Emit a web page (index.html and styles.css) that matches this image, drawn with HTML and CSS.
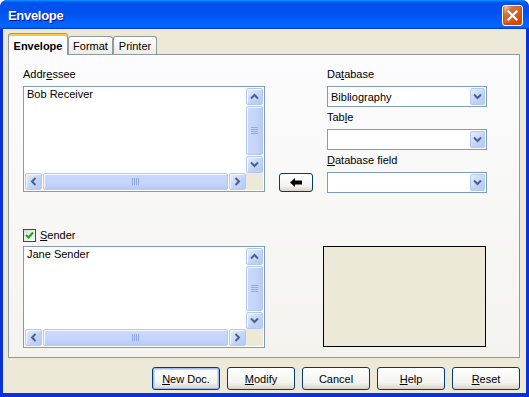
FILE: index.html
```html
<!DOCTYPE html>
<html lang="en">
<head>
    <meta charset="UTF-8">
    <meta name="viewport" content="width=device-width, initial-scale=1.0">
    <title>Envelope</title>
    <link rel="stylesheet" href="styles.css">
</head>
<body>
    <div class="window">
        <div class="titlebar">
            <span class="title">Envelope</span>
            <button class="close" aria-label="Close">
                <svg width="11" height="11" viewBox="0 0 11 11"><path d="M1.5 1.5 L9.5 9.5 M9.5 1.5 L1.5 9.5" stroke="#fff" stroke-width="2.2" stroke-linecap="square"/></svg>
            </button>
        </div>
        <div class="client">
            <div class="tabs">
                <div class="tab active">Envelope</div>
                <div class="tab format">Format</div>
                <div class="tab printer">Printer</div>
            </div>
            <div class="panel">
                <div class="top">
                    <div class="left-col">
                        <div class="label">Addr<u>e</u>ssee</div>
                        <div class="textbox addressee">
                            <div class="tb-text">Bob Receiver</div>
                            <div class="vscroll">
                                <span class="sb-btn"><svg width="9" height="7" viewBox="0 0 9 7"><path d="M1 5.5 L4.5 2 L8 5.5" fill="none" stroke="#4d6185" stroke-width="2"/></svg></span>
                                <span class="sb-thumb"><svg width="7" height="8" viewBox="0 0 7 8"><path d="M0 0.5 H7 M0 2.5 H7 M0 4.5 H7 M0 6.5 H7" stroke="#8eaae8" stroke-width="1"/></svg></span>
                                <span class="sb-btn"><svg width="9" height="7" viewBox="0 0 9 7"><path d="M1 1.5 L4.5 5 L8 1.5" fill="none" stroke="#4d6185" stroke-width="2"/></svg></span>
                            </div>
                            <div class="hscroll">
                                <span class="sb-btn"><svg width="7" height="9" viewBox="0 0 7 9"><path d="M5.5 1 L2 4.5 L5.5 8" fill="none" stroke="#4d6185" stroke-width="2"/></svg></span>
                                <span class="sb-thumb"><svg width="8" height="7" viewBox="0 0 8 7"><path d="M0.5 0 V7 M2.5 0 V7 M4.5 0 V7 M6.5 0 V7" stroke="#8eaae8" stroke-width="1"/></svg></span>
                                <span class="sb-btn"><svg width="7" height="9" viewBox="0 0 7 9"><path d="M1.5 1 L5 4.5 L1.5 8" fill="none" stroke="#4d6185" stroke-width="2"/></svg></span>
                            </div>
                            <div class="corner"></div>
                        </div>
                    </div>
                    <button class="arrow-btn" aria-label="Insert">
                        <svg width="12" height="9" viewBox="0 0 12 9"><path d="M0 4.5 L5 0 V2.5 H12 V6.5 H5 V9 Z" fill="#000"/></svg>
                    </button>
                    <div class="right-col">
                        <div class="label">Da<u>t</u>abase</div>
                        <div class="combo">
                            <span class="combo-text">Bibliography</span>
                            <span class="combo-btn"><svg width="9" height="7" viewBox="0 0 9 7"><path d="M1 1.5 L4.5 5 L8 1.5" fill="none" stroke="#4d6185" stroke-width="2"/></svg></span>
                        </div>
                        <div class="label">Tab<u>l</u>e</div>
                        <div class="combo">
                            <span class="combo-text"></span>
                            <span class="combo-btn"><svg width="9" height="7" viewBox="0 0 9 7"><path d="M1 1.5 L4.5 5 L8 1.5" fill="none" stroke="#4d6185" stroke-width="2"/></svg></span>
                        </div>
                        <div class="label"><u>D</u>atabase field</div>
                        <div class="combo">
                            <span class="combo-text"></span>
                            <span class="combo-btn"><svg width="9" height="7" viewBox="0 0 9 7"><path d="M1 1.5 L4.5 5 L8 1.5" fill="none" stroke="#4d6185" stroke-width="2"/></svg></span>
                        </div>
                    </div>
                </div>
                <div class="bottom">
                    <div class="left-col">
                        <div class="check">
                            <span class="check-box"><svg width="9" height="9" viewBox="0 0 9 9"><path d="M1 4 L3.5 6.5 L8 1.5" fill="none" stroke="#21a121" stroke-width="2"/></svg></span>
                            <span><u>S</u>ender</span>
                        </div>
                        <div class="textbox sender">
                            <div class="tb-text">Jane Sender</div>
                            <div class="vscroll">
                                <span class="sb-btn"><svg width="9" height="7" viewBox="0 0 9 7"><path d="M1 5.5 L4.5 2 L8 5.5" fill="none" stroke="#4d6185" stroke-width="2"/></svg></span>
                                <span class="sb-thumb"><svg width="7" height="8" viewBox="0 0 7 8"><path d="M0 0.5 H7 M0 2.5 H7 M0 4.5 H7 M0 6.5 H7" stroke="#8eaae8" stroke-width="1"/></svg></span>
                                <span class="sb-btn"><svg width="9" height="7" viewBox="0 0 9 7"><path d="M1 1.5 L4.5 5 L8 1.5" fill="none" stroke="#4d6185" stroke-width="2"/></svg></span>
                            </div>
                            <div class="hscroll">
                                <span class="sb-btn"><svg width="7" height="9" viewBox="0 0 7 9"><path d="M5.5 1 L2 4.5 L5.5 8" fill="none" stroke="#4d6185" stroke-width="2"/></svg></span>
                                <span class="sb-thumb"><svg width="8" height="7" viewBox="0 0 8 7"><path d="M0.5 0 V7 M2.5 0 V7 M4.5 0 V7 M6.5 0 V7" stroke="#8eaae8" stroke-width="1"/></svg></span>
                                <span class="sb-btn"><svg width="7" height="9" viewBox="0 0 7 9"><path d="M1.5 1 L5 4.5 L1.5 8" fill="none" stroke="#4d6185" stroke-width="2"/></svg></span>
                            </div>
                            <div class="corner"></div>
                        </div>
                    </div>
                    <div class="preview"></div>
                </div>
            </div>
            <div class="buttons">
                <button class="btn default"><u>N</u>ew Doc.</button>
                <button class="btn"><u>M</u>odify</button>
                <button class="btn">Cancel</button>
                <button class="btn"><u>H</u>elp</button>
                <button class="btn"><u>R</u>eset</button>
            </div>
        </div>
    </div>
</body>
</html>
```

FILE: styles.css
```css
* {
    box-sizing: border-box;
}
body {
    margin: 0;
    background: #fff;
    font-family: "Liberation Sans", Arial, sans-serif;
    font-size: 11px;
    color: #000;
}
u {
    text-decoration: underline;
    text-underline-offset: 1px;
}
.window {
    width: 529px;
    height: 397px;
    display: flex;
    flex-direction: column;
    background: #0831d9;
    border-radius: 7px 7px 0 0;
    overflow: hidden;
}
.titlebar {
    height: 29px;
    flex: none;
    display: flex;
    align-items: center;
    padding: 0 6px 0 8px;
    background: linear-gradient(180deg, #0997ff, #0053ee 8%, #0050ee 40%, #0066ff 88%, #0066ff 93%, #005bff 95%, #003dd7 96%, #003dd7);
}
.title {
    flex: 1;
    color: #fff;
    font-weight: bold;
    font-size: 13px;
    letter-spacing: -0.3px;
    text-shadow: 1px 1px #0f1089;
    margin-top: 1px;
}
.close {
    width: 21px;
    height: 21px;
    padding: 0;
    display: flex;
    align-items: center;
    justify-content: center;
    border: 1px solid #fff;
    border-radius: 3px;
    background: radial-gradient(circle at 90% 90%, #cc4600 0, #dc6527 55%, #cd7546 70%, #ffccb2 90%, #fff 100%);
    box-shadow: inset 0 -1px 2px 1px #da4600;
    margin-top: 2px;
}
.client {
    flex: 1;
    margin: 0 3px 4px 3px;
    padding: 4px 6px 3px 5px;
    background: #ece9d8;
    display: flex;
    flex-direction: column;
}
.tabs {
    height: 21px;
    display: flex;
    align-items: flex-end;
}
.tab {
    height: 18px;
    display: flex;
    align-items: center;
    justify-content: center;
    padding-top: 1px;
    border: 1px solid #919b9c;
    border-bottom: none;
    border-radius: 3px 3px 0 0;
    background: linear-gradient(#fff, #ecebe6);
}
.tab.active {
    width: 60px;
    height: 22px;
    margin-bottom: -1px;
    padding-top: 3px;
    position: relative;
    z-index: 1;
    font-weight: bold;
    background: #fcfcfe;
    border-top: 1px solid #e68b2c;
    box-shadow: inset 0 2px #ffc73c;
}
.tab.format {
    width: 45px;
}
.tab.printer {
    width: 44px;
}
.panel {
    height: 304px;
    flex: none;
    border: 1px solid #919b9c;
    background: linear-gradient(#fcfcfe, #f4f3ee);
    padding: 13px 0 9px 14px;
}
.top {
    height: 124px;
    display: flex;
    align-items: flex-start;
}
.left-col {
    width: 242px;
    flex: none;
}
.label {
    height: 13px;
    line-height: 13px;
    margin-bottom: 5px;
    white-space: nowrap;
}
.textbox {
    display: grid;
    grid-template-columns: 1fr 17px;
    grid-template-rows: 1fr 17px;
    border: 1px solid #7f9db9;
    padding: 1px;
    background: #fff;
}
.textbox.addressee {
    height: 106px;
}
.textbox.sender {
    height: 102px;
    margin-top: 4px;
}
.tb-text {
    padding: 0 2px;
    line-height: 12px;
}
.vscroll, .hscroll {
    display: flex;
    background: #fdfdfa;
}
.vscroll {
    flex-direction: column;
}
.sb-btn, .sb-thumb {
    display: flex;
    align-items: center;
    justify-content: center;
    border: 1px solid #b4c8f6;
    border-radius: 2px;
    background: linear-gradient(135deg, #e6eefc, #c1d3fb 60%, #b4c9f7);
    box-shadow: inset 1px 1px #f4f8ff;
}
.sb-btn {
    width: 17px;
    height: 17px;
    flex: none;
}
.sb-thumb {
    flex: 1;
}
.vscroll .sb-thumb {
    margin: 1px 0;
    background: linear-gradient(90deg, #cadafc, #c4d5fb 60%, #b8cbf7);
}
.hscroll .sb-thumb {
    margin: 0 1px;
    background: linear-gradient(#cadafc, #c4d5fb 60%, #b8cbf7);
}
.corner {
    background: #ece9d8;
}
.arrow-btn {
    width: 34px;
    height: 19px;
    flex: none;
    align-self: flex-end;
    margin: 0 0 0 14px;
    padding: 0;
    display: flex;
    align-items: center;
    justify-content: center;
    border: 1px solid #003c74;
    border-radius: 3px;
    background: linear-gradient(#fff, #f3f3ef 70%, #d8d3c8);
}
.right-col {
    width: 160px;
    flex: none;
    margin-left: 14px;
}
.combo {
    height: 21px;
    margin-bottom: 4px;
    display: flex;
    align-items: center;
    border: 1px solid #7f9db9;
    background: #fff;
    padding: 1px;
}
.combo-text {
    flex: 1;
    padding-left: 2px;
}
.combo-btn {
    width: 15px;
    height: 17px;
    display: flex;
    align-items: center;
    justify-content: center;
    border: 1px solid #b4c8f6;
    border-radius: 2px;
    background: linear-gradient(135deg, #e6eefc, #c1d3fb 60%, #b4c9f7);
}
.bottom {
    margin-top: 37px;
    display: flex;
    align-items: flex-start;
}
.check {
    height: 13px;
    display: flex;
    align-items: center;
    gap: 4px;
    line-height: 13px;
}
.check-box {
    width: 13px;
    height: 13px;
    display: flex;
    align-items: center;
    justify-content: center;
    border: 1px solid #1c5180;
    background: linear-gradient(135deg, #dcdcd7, #fff);
}
.preview {
    width: 163px;
    height: 101px;
    margin: 17px 0 0 58px;
    border: 1px solid #000;
    background: #ece9d8;
}
.buttons {
    margin-top: 9px;
    display: flex;
    justify-content: flex-end;
    gap: 7px;
}
.btn {
    width: 68px;
    height: 23px;
    padding: 0;
    font-family: "Liberation Sans", Arial, sans-serif;
    font-size: 11px;
    color: #000;
    border: 1px solid #003c74;
    border-radius: 3px;
    background: linear-gradient(#fff, #f3f3ef 70%, #d8d3c8);
}
.btn.default {
    box-shadow: inset 0 0 0 1px #a0bbed, inset 0 0 0 2px #c8daf8;
}
```
